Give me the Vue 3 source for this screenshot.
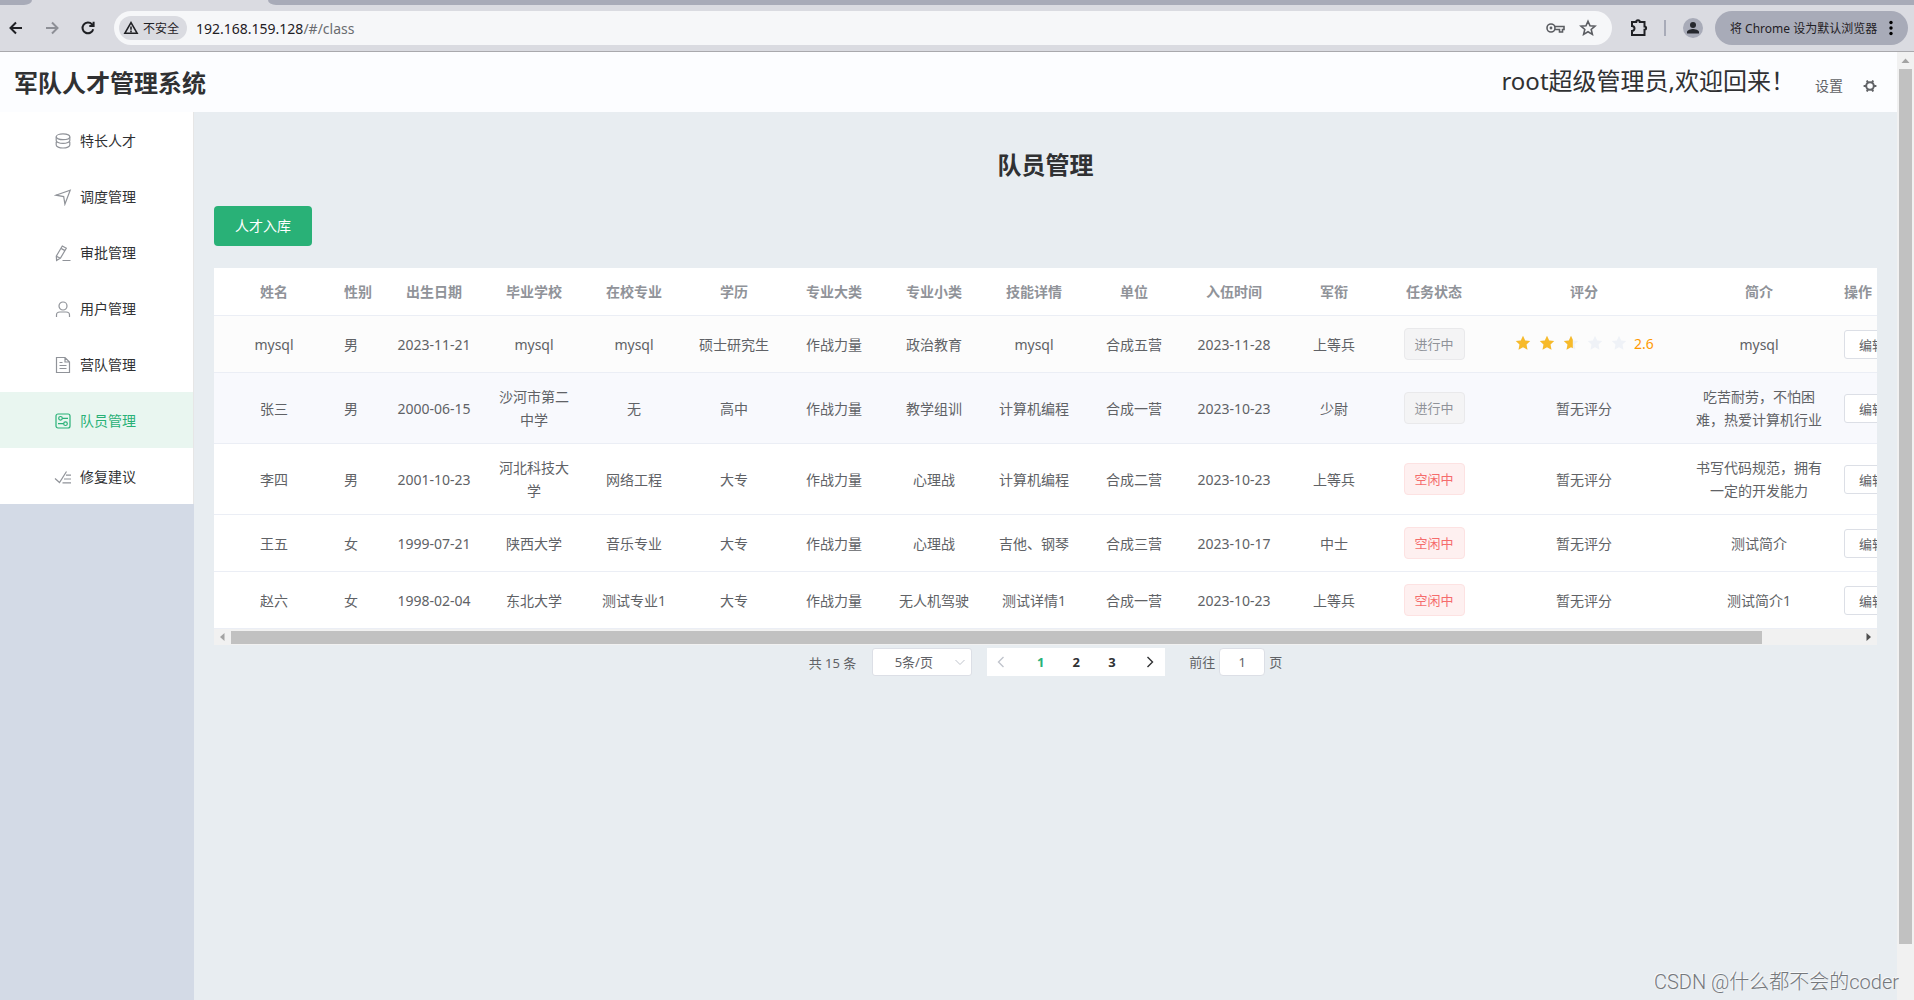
<script setup>
import { ref } from 'vue'

const menu = [
  { label: '特长人才', icon: 'coin' },
  { label: '调度管理', icon: 'position' },
  { label: '审批管理', icon: 'edit' },
  { label: '用户管理', icon: 'user' },
  { label: '营队管理', icon: 'document' },
  { label: '队员管理', icon: 'operation' },
  { label: '修复建议', icon: 'finished' },
]
const active = ref('队员管理')

const columns = [
  { label: '姓名', width: 120 },
  { label: '性别', width: 50, left: true },
  { label: '出生日期', width: 100 },
  { label: '毕业学校', width: 100 },
  { label: '在校专业', width: 100 },
  { label: '学历', width: 100 },
  { label: '专业大类', width: 100 },
  { label: '专业小类', width: 100 },
  { label: '技能详情', width: 100 },
  { label: '单位', width: 100 },
  { label: '入伍时间', width: 100 },
  { label: '军衔', width: 100 },
  { label: '任务状态', width: 100 },
  { label: '评分', width: 200 },
  { label: '简介', width: 150 },
  { label: '操作', width: 150, left: true },
]

const rows = [
  { cells: ['mysql', '男', '2023-11-21', 'mysql', 'mysql', '硕士研究生', '作战力量', '政治教育', 'mysql', '合成五营', '2023-11-28', '上等兵'], busy: true, score: 2.6, intro: 'mysql' },
  { cells: ['张三', '男', '2000-06-15', '沙河市第二中学', '无', '高中', '作战力量', '教学组训', '计算机编程', '合成一营', '2023-10-23', '少尉'], busy: true, intro: '吃苦耐劳，不怕困难，热爱计算机行业' },
  { cells: ['李四', '男', '2001-10-23', '河北科技大学', '网络工程', '大专', '作战力量', '心理战', '计算机编程', '合成二营', '2023-10-23', '上等兵'], busy: false, intro: '书写代码规范，拥有一定的开发能力' },
  { cells: ['王五', '女', '1999-07-21', '陕西大学', '音乐专业', '大专', '作战力量', '心理战', '吉他、钢琴', '合成三营', '2023-10-17', '中士'], busy: false, intro: '测试简介' },
  { cells: ['赵六', '女', '1998-02-04', '东北大学', '测试专业1', '大专', '作战力量', '无人机驾驶', '测试详情1', '合成一营', '2023-10-23', '上等兵'], busy: false, intro: '测试简介1' },
]

const star = 'm9 1.8 2.2 4.7 5 .6-3.7 3.5 1 5.1L9 13.2l-4.5 2.5 1-5.1L1.800 7.100l5-.6z'
const starPart = 'm9 1.8 1.8 3.9v8.500L9 13.2l-4.5 2.5 1-5.1L1.8 7.1l5-.6z'

const page = ref(1)
const jump = ref('1')
</script>

<template>
  <div class="window">
    <div class="tabs">
      <div class="tab-before"></div>
      <div class="tab-after"></div>
    </div>
    <div class="toolbar">
      <div class="nav">
        <button type="button" aria-label="后退">
          <svg width="16" height="16" viewBox="0 0 16 16"><path d="M14 8H3M8 2.5 2.5 8 8 13.5" /></svg>
        </button>
        <button type="button" class="dim" aria-label="前进">
          <svg width="16" height="16" viewBox="0 0 16 16"><path d="M2 8h11M8 2.5 13.5 8 8 13.5" /></svg>
        </button>
        <button type="button" aria-label="重新加载">
          <svg width="16" height="16" viewBox="0 0 16 16"><path d="M13.2 9.2A5.4 5.4 0 1 1 12 4.3l1 1.2M13.6 1.8v4.3H9.3" /></svg>
        </button>
      </div>
      <div class="omnibox">
        <span class="chip">
          <svg width="16" height="16" viewBox="0 0 16 16"><path d="M8 2.6 1.9 13.2h12.2zM8 6.4v3.4M8 10.6v1.6" /></svg>
          不安全
        </span>
        <span class="url">192.168.159.128<i>/#/class</i></span>
        <svg class="key" width="20" height="16" viewBox="0 0 20 16"><circle cx="6" cy="8" r="4" /><circle cx="6" cy="8" r="0.6" /><path d="M9.800 6.500H19v3h-1.500V12h-3V9.500H9.800" /></svg>
        <svg width="18" height="18" viewBox="0 0 18 18"><path d="m9 2.2 2 4.600 5 .4-3.800 3.300 1.200 4.900L9 12.800l-4.400 2.600 1.200-4.900L2 7.200l5-.4z" /></svg>
      </div>
      <svg class="puzzle" width="20" height="20" viewBox="0 0 20 20"><path d="M3 4h4.200A1.800 1.800 0 0 1 10.800 4H15.500v4.500a1.600 1.600 0 0 1 0 3.200V17H3v-4a2.400 2.400 0 0 0 0-5z" /></svg>
      <span class="divider"></span>
      <span class="avatar">
        <svg width="20" height="20" viewBox="0 0 20 20"><circle cx="10" cy="7" r="3" /><path d="M4 15.500V14c0-2 4-3 6-3s6 1 6 3v1.500z" /></svg>
      </span>
      <button type="button" class="default-browser">
        将 Chrome 设为默认浏览器
        <svg width="4" height="16" viewBox="0 0 4 16"><circle cx="2" cy="2.500" r="1.700" /><circle cx="2" cy="8" r="1.700" /><circle cx="2" cy="13.500" r="1.700" /></svg>
      </button>
    </div>

    <div class="viewport">
      <div class="page">
        <header>
          <h1>军队人才管理系统</h1>
          <span class="welcome">root超级管理员,欢迎回来！</span>
          <a href="#/setting">设置</a>
          <svg width="14" height="14" viewBox="0 0 14 14">
            <circle cx="7" cy="7" r="3.800" />
            <path d="M10.500 7H13.400M8.800 10.100l1.400 2.500M5.200 10.100l-1.400 2.500M3.500 7H.6M5.200 3.900 3.800 1.400M8.800 3.900l1.400-2.500" />
          </svg>
        </header>
        <div class="body">
          <aside>
            <nav>
              <a
                v-for="item in menu"
                :key="item.label"
                href="#/class"
                :class="{ active: item.label === active }"
                @click.prevent="active = item.label"
              >
                <svg width="18" height="18" viewBox="0 0 18 18">
                  <g v-if="item.icon === 'coin'">
                    <ellipse cx="9" cy="4.800" rx="6.800" ry="2.900" />
                    <path d="M2.200 4.800v3.600c0 1.600 3 3 6.800 3s6.800-1.400 6.800-3V4.800M2.200 9.800V13c0 1.600 3 3 6.800 3s6.800-1.400 6.800-3V9.800" />
                  </g>
                  <path v-else-if="item.icon === 'position'" d="m1.800 7.200 14.400-5-5.300 14L9.700 8.600z" />
                  <path v-else-if="item.icon === 'edit'" d="m8.300 2 4 2.200-5.800 9.900-3.900 2.300-.3-4.300zM7 4.400l4 2.200M2.400 12.200l4 2M8.500 16.500H16.500" />
                  <g v-else-if="item.icon === 'user'">
                    <circle cx="9" cy="6" r="4" />
                    <path d="M2.500 17v-2c0-2 1.400-3 3.400-3h6.200c2 0 3.400 1 3.400 3v2" />
                  </g>
                  <path v-else-if="item.icon === 'document'" d="M2.500 1.500h8.500l4.500 4.500v10.500h-13zM11 1.500V6h4.500M5.500 6.500h3M5.500 9.500h7M5.500 12.500h7" />
                  <g v-else-if="item.icon === 'operation'">
                    <rect x="2" y="2" width="14" height="14" rx="2" />
                    <circle cx="6.500" cy="6.300" r="1.800" />
                    <circle cx="11.500" cy="11.700" r="1.800" />
                    <path d="M8.300 6.300H14M4 11.700h5.700" />
                  </g>
                  <path v-else d="m1 10.500 4.500 4L12.500 3.500M12 7.200h5M10 11h7M8.500 14.800H17" />
                </svg>
                {{ item.label }}
              </a>
            </nav>
          </aside>
          <main>
            <h2>队员管理</h2>
            <button type="button" class="primary">人才入库</button>
            <div class="table-box">
              <table>
                <colgroup>
                  <col v-for="c in columns" :key="c.label" :style="{ width: c.width + 'px' }" />
                </colgroup>
                <thead>
                  <tr>
                    <th v-for="c in columns" :key="c.label" :class="{ left: c.left }">{{ c.label }}</th>
                  </tr>
                </thead>
                <tbody>
                  <tr v-for="r in rows" :key="r.cells[0]">
                    <td v-for="(cell, i) in r.cells" :key="i" :class="{ left: columns[i].left }">{{ cell }}</td>
                    <td>
                      <span class="tag" :class="{ danger: !r.busy }">{{ r.busy ? '进行中' : '空闲中' }}</span>
                    </td>
                    <td>
                      <span v-if="r.score" class="rate">
                        <svg v-for="n in 5" :key="n" width="18" height="18" viewBox="0 0 18 18">
                          <path class="off" :d="star" />
                          <path v-if="n <= r.score" class="on" :d="star" />
                          <path v-else-if="n - r.score < 1" class="on" :d="starPart" />
                        </svg>
                        {{ r.score }}
                      </span>
                      <template v-else>暂无评分</template>
                    </td>
                    <td>{{ r.intro }}</td>
                    <td class="left actions"><button type="button">编辑</button></td>
                  </tr>
                </tbody>
              </table>
            </div>
            <div class="hscroll">
              <svg width="17" height="16" viewBox="0 0 17 16"><path d="M10.500 4v8L6 8z" fill="#a3a3a3" /></svg>
              <div class="track"><div class="thumb"></div></div>
              <svg width="17" height="16" viewBox="0 0 17 16"><path d="M6.500 4v8L11 8z" fill="#505050" /></svg>
            </div>
            <div class="pagination">
              <span>共 15 条</span>
              <div class="sizes">
                <select aria-label="每页条数"><option>5条/页</option></select>
                <svg width="12" height="12" viewBox="0 0 12 12"><path d="m1.500 4 4.500 4.500L10.500 4" /></svg>
              </div>
              <div class="pager">
                <button type="button" class="prev" aria-label="上一页">
                  <svg width="12" height="12" viewBox="0 0 12 12"><path d="M8.500 1 3.500 6l5 5" /></svg>
                </button>
                <button v-for="n in 3" :key="n" type="button" :class="{ current: n === page }" @click="page = n">{{ n }}</button>
                <button type="button" class="next" aria-label="下一页">
                  <svg width="12" height="12" viewBox="0 0 12 12"><path d="m3.500 1 5 5-5 5" /></svg>
                </button>
              </div>
              <label class="jump">前往<input v-model="jump" type="text" />页</label>
            </div>
          </main>
        </div>
      </div>
      <div class="vscroll">
        <svg width="17" height="17" viewBox="0 0 17 17"><path d="M4.500 11h8l-4-4.500z" fill="#a3a3a3" /></svg>
        <div class="thumb"></div>
      </div>
    </div>
    <div class="watermark">CSDN @什么都不会的coder</div>
  </div>
</template>

<style>
body {
  margin: 0;
}
</style>

<style scoped>
.window {
  position: relative;
  display: flex;
  flex-direction: column;
  height: 100vh;
  overflow: hidden;
  font-family: "Noto Sans", "Noto Sans CJK SC", sans-serif;
  font-size: 14px;
  color: #606266;
}
* {
  box-sizing: border-box;
}
button,
input,
select {
  font-family: inherit;
}
button {
  cursor: pointer;
}
svg {
  flex: none;
}
a {
  text-decoration: none;
}

/* browser chrome */
.tabs {
  display: flex;
  gap: 236px;
  flex: none;
  height: 5px;
  background: #dadbe1;
}
.tab-before {
  width: 32px;
  background: #a8abb8;
  border-bottom-right-radius: 8px 5px;
}
.tab-after {
  flex: 1;
  background: #a8abb8;
  border-bottom-left-radius: 8px 5px;
}
.toolbar {
  display: flex;
  align-items: center;
  flex: none;
  height: 47px;
  padding: 0 6px 0 8px;
  background: #dadbe1;
  border-bottom: 1px solid #a9a9ad;
}
.nav {
  display: flex;
  gap: 20px;
  width: 106px;
}
.nav button {
  display: flex;
  padding: 0;
  border: 0;
  background: none;
}
.nav path {
  fill: none;
  stroke: #1f2024;
  stroke-width: 2;
}
.nav .dim path {
  stroke: #8d8f96;
}
.omnibox {
  display: flex;
  align-items: center;
  flex: 1;
  height: 34px;
  padding: 0 15px 0 5px;
  border-radius: 17px;
  background: #f6f7f9;
}
.omnibox svg {
  fill: none;
  stroke: #5b5d62;
  stroke-width: 1.6;
}
.chip {
  display: flex;
  align-items: center;
  gap: 4px;
  height: 24px;
  padding: 0 8px 0 4px;
  border-radius: 12px;
  background: #dadbe1;
  color: #1f2024;
  font-size: 12px;
}
.omnibox .chip svg {
  stroke: #1f2024;
}
.url {
  flex: 1;
  margin-left: 9px;
  color: #1f2024;
}
.url i {
  font-style: normal;
  color: #6a6c70;
}
.omnibox .key {
  margin-right: 14px;
}
.puzzle {
  margin-left: 17px;
  fill: none;
  stroke: #1f2024;
  stroke-width: 2;
}
.divider {
  width: 2px;
  height: 16px;
  margin: 0 17px 0 15px;
  background: #a8abb8;
}
.avatar {
  display: flex;
  margin-right: 12px;
  border-radius: 10px;
  background: #a8abb8;
  fill: #26282e;
}
.default-browser {
  display: flex;
  align-items: center;
  justify-content: space-between;
  width: 193px;
  height: 34px;
  padding: 0 15px;
  border: 0;
  border-radius: 17px;
  background: #a8abb8;
  color: #1f2024;
  font-size: 12px;
  white-space: nowrap;
}

/* page */
.viewport {
  display: flex;
  flex: 1;
  min-height: 0;
}
.page {
  display: flex;
  flex-direction: column;
  flex: 1;
  min-width: 0;
}
header {
  display: flex;
  align-items: center;
  flex: none;
  height: 60px;
  padding: 0 20px 0 14px;
  background: #fcfdff;
  color: #303133;
}
h1 {
  flex: 1;
  margin: 2px 0 0;
  font-size: 24px;
  line-height: 36px;
}
.welcome {
  font-size: 24px;
  line-height: 32px;
  margin-bottom: 2px;
}
header a {
  margin: 6px 20px 0;
  color: #606266;
}
header svg {
  margin-top: 8px;
  fill: none;
  stroke: #606266;
  stroke-width: 2;
}
.body {
  display: flex;
  flex: 1;
  min-height: 0;
}
aside {
  flex: none;
  width: 194px;
  background: #d3dae6;
}
nav {
  border-right: 1px solid #e6e6e6;
  background: #fff;
}
nav a {
  display: flex;
  align-items: center;
  gap: 8px;
  height: 56px;
  padding-left: 54px;
  color: #303133;
}
nav svg {
  margin-top: 2px;
  fill: none;
  stroke: #909399;
  stroke-width: 1.2;
}
nav .active {
  background: #e9f6f0;
  color: #29b177;
}
nav .active svg {
  stroke: #29b177;
}
main {
  flex: 1;
  min-width: 0;
  padding: 0 20px;
  background: #e8edf1;
}
h2 {
  margin: 35px 0 23px;
  color: #303133;
  font-size: 24px;
  line-height: 36px;
  text-align: center;
}
.primary {
  display: block;
  height: 40px;
  padding: 0 21px 2px;
  border: 0;
  border-radius: 4px;
  background: #29b177;
  color: #fff;
  font-size: 14px;
}

/* table */
.table-box {
  margin-top: 22px;
  overflow: hidden;
}
table {
  width: 1770px;
  table-layout: fixed;
  border-collapse: separate;
  border-spacing: 0;
  background: #fff;
}
th,
td {
  border-bottom: 1px solid #ebeef5;
  line-height: 23px;
  text-align: center;
}
th {
  padding: 12px 10px;
  color: #909399;
}
td {
  height: 57px;
  padding: 0 10px;
}
th.left,
td.left {
  text-align: left;
}
tbody tr:nth-child(2) td,
tbody tr:nth-child(3) td {
  height: 71px;
}
tbody tr:nth-child(1) {
  background: #fcfcfc;
}
tbody tr:nth-child(2) {
  background: #f8f9fd;
}
.tag {
  display: block;
  width: 61px;
  height: 32px;
  margin: 0 auto;
  border: 1px solid #e9e9eb;
  border-radius: 4px;
  background: #f4f4f5;
  color: #909399;
  font-size: 13px;
  line-height: 30px;
}
.tag.danger {
  border-color: #fde2e2;
  background: #fef0f0;
  color: #f56c6c;
}
.rate {
  display: flex;
  align-items: center;
  justify-content: center;
  gap: 6px;
  padding-bottom: 2px;
  color: #ff9900;
}
.off {
  fill: #eff2f7;
}
.on {
  fill: #f7ba2a;
}
.actions button {
  display: block;
  height: 29px;
  padding: 0 14px;
  border: 1px solid #dcdfe6;
  border-radius: 3px;
  background: #fff;
  color: #606266;
  font-size: 13px;
}

/* scrollbars */
.hscroll {
  display: flex;
  align-items: center;
  height: 16px;
  background: #f1f1f1;
}
.track {
  flex: 1;
}
.hscroll .thumb {
  width: 94%;
  height: 13px;
  background: #c1c1c1;
}
.vscroll {
  display: flex;
  flex-direction: column;
  flex: none;
  width: 17px;
  background: #f1f1f1;
}
.vscroll .thumb {
  flex: 1;
  margin: 0 2px 56px;
  background: #c1c1c1;
}

/* pagination */
.pagination {
  display: flex;
  align-items: center;
  justify-content: center;
  padding: 3px 0;
  font-size: 13px;
}
.sizes {
  position: relative;
  margin: 0 15px 0 16px;
}
.sizes select {
  display: block;
  width: 100px;
  height: 28px;
  padding: 0 25px 0 8px;
  appearance: none;
  border: 1px solid #dcdfe6;
  border-radius: 3px;
  background: #fff;
  color: #606266;
  font-size: 13px;
  text-align: center;
}
.sizes svg {
  position: absolute;
  top: 8px;
  right: 6px;
  fill: none;
  stroke: #c0c4cc;
}
.pager {
  display: flex;
  width: 178px;
  height: 28px;
  background: #fff;
}
.pager button {
  flex: 0 0 20%;
  padding: 0;
  border: 0;
  background: none;
  color: #303133;
  font-size: 13px;
  font-weight: 700;
}
.pager .current {
  color: #29b177;
}
.pager svg {
  display: block;
  margin: 0 auto;
  fill: none;
  stroke: #303133;
  stroke-width: 1.4;
}
.pager .prev {
  padding-right: 8px;
}
.pager .prev svg {
  stroke: #c0c4cc;
}
.pager .next {
  padding-left: 6px;
}
.jump {
  margin-left: 24px;
}
.jump input {
  width: 46px;
  height: 28px;
  margin: 0 4px;
  padding: 0;
  border: 1px solid #dcdfe6;
  border-radius: 4px;
  background: #fff;
  color: #606266;
  font-size: 13px;
  text-align: center;
}

.watermark {
  position: absolute;
  right: 15px;
  bottom: 4px;
  color: #75787c;
  font-family: Roboto, "Noto Sans CJK SC", sans-serif;
  font-size: 20px;
  font-weight: 300;
  line-height: 28px;
  text-shadow: -1px -1px 0 #f8f9fa;
}
</style>
